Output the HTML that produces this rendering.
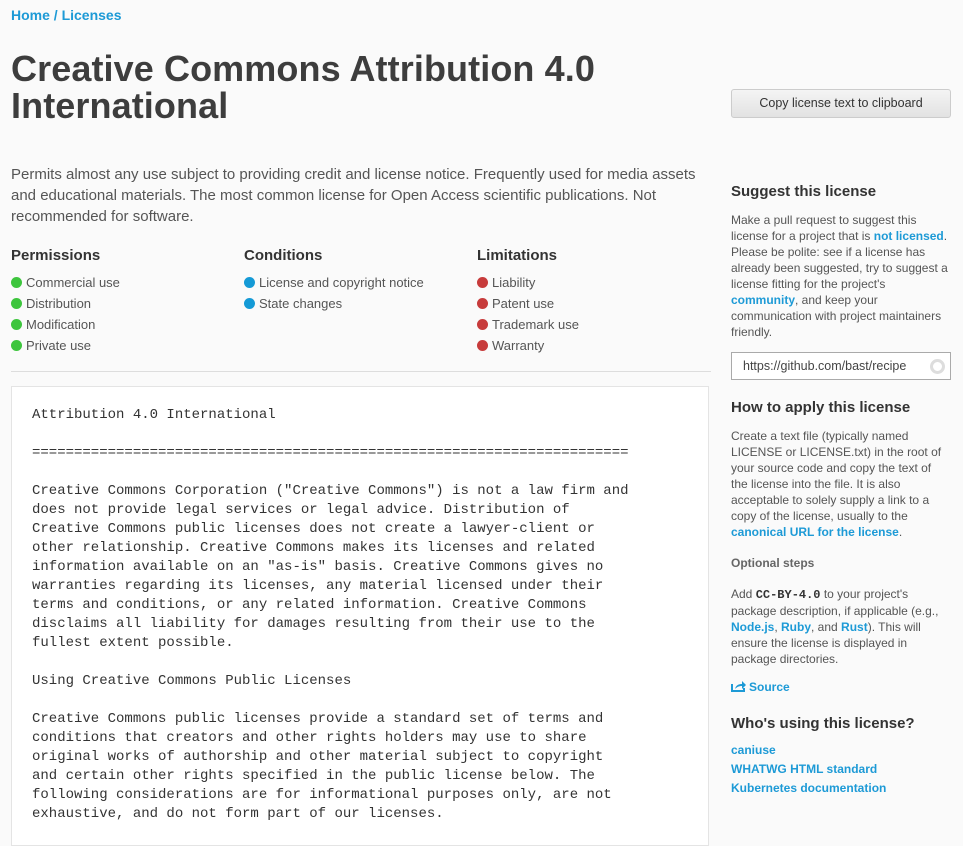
<!DOCTYPE html>
<html><head><meta charset="utf-8"><style>
body{margin:0;background:#fafafa;font-family:"Liberation Sans",sans-serif;color:#444;width:963px;height:819px;overflow:hidden;position:relative}
a{color:#1d9ad6;text-decoration:none;font-weight:bold}
.abs{position:absolute}
h1{position:absolute;left:11px;top:50px;margin:0;font-size:36px;line-height:37px;font-weight:900;color:#3d3d3d;letter-spacing:0.1px;width:710px}
.desc{left:11px;top:164px;width:700px;font-size:15px;line-height:21px;color:#555}
.col{top:247px;font-size:13px;color:#555}
.col h3{margin:0 0 8px;font-size:15px;color:#333}
.col div{line-height:21px}
.dot{display:inline-block;width:11px;height:11px;border-radius:50%;margin-right:4px;vertical-align:-1px}
.g{background:#3dc53d}.b{background:#149ad6}.r{background:#c73b3b}
pre{position:absolute;left:11px;top:386px;width:698px;height:460px;margin:0;background:#fff;border:1px solid #e4e4e4;font-family:"Liberation Mono",monospace;font-size:14px;line-height:19px;color:#333;padding:19px 0 0 20px;box-sizing:border-box;overflow:hidden}
.side{left:731px;width:221px;font-size:12px;line-height:16px;color:#555}
.side h4{margin:0;font-size:15px;color:#333;font-weight:900}
.btn{left:731px;top:89px;width:218px;height:27px;border:1px solid #ccc;border-radius:3px;background:linear-gradient(#f4f4f4,#e2e2e2);font-size:12.5px;text-align:center;line-height:27px;color:#333}
</style></head><body>
<div class="abs" style="left:11px;top:7px;font-size:14px;font-weight:bold;color:#1d9ad6">Home / Licenses</div>
<h1>Creative Commons Attribution 4.0 International</h1>
<div class="abs btn">Copy license text to clipboard</div>
<div class="abs desc">Permits almost any use subject to providing credit and license notice. Frequently used for media assets and educational materials. The most common license for Open Access scientific publications. Not recommended for software.</div>
<div class="abs col" style="left:11px"><h3>Permissions</h3><div><span class="dot g"></span>Commercial use</div><div><span class="dot g"></span>Distribution</div><div><span class="dot g"></span>Modification</div><div><span class="dot g"></span>Private use</div></div>
<div class="abs col" style="left:244px"><h3>Conditions</h3><div><span class="dot b"></span>License and copyright notice</div><div><span class="dot b"></span>State changes</div></div>
<div class="abs col" style="left:477px"><h3>Limitations</h3><div><span class="dot r"></span>Liability</div><div><span class="dot r"></span>Patent use</div><div><span class="dot r"></span>Trademark use</div><div><span class="dot r"></span>Warranty</div></div>
<div class="abs" style="left:11px;top:371px;width:700px;border-top:1px solid #ddd"></div>
<pre>Attribution 4.0 International

=======================================================================

Creative Commons Corporation ("Creative Commons") is not a law firm and
does not provide legal services or legal advice. Distribution of
Creative Commons public licenses does not create a lawyer-client or
other relationship. Creative Commons makes its licenses and related
information available on an "as-is" basis. Creative Commons gives no
warranties regarding its licenses, any material licensed under their
terms and conditions, or any related information. Creative Commons
disclaims all liability for damages resulting from their use to the
fullest extent possible.

Using Creative Commons Public Licenses

Creative Commons public licenses provide a standard set of terms and
conditions that creators and other rights holders may use to share
original works of authorship and other material subject to copyright
and certain other rights specified in the public license below. The
following considerations are for informational purposes only, are not
exhaustive, and do not form part of our licenses.</pre>
<div class="abs side" style="top:184px"><h4>Suggest this license</h4>
<div style="margin-top:12px">Make a pull request to suggest this<br>license for a project that is <a>not licensed</a>.<br>Please be polite: see if a license has<br>already been suggested, try to suggest a<br>license fitting for the project's<br><a>community</a>, and keep your<br>communication with project maintainers<br>friendly.</div>
<div style="margin-top:12px;width:220px;height:28px;border:1px solid #aaa;background:#fff;box-sizing:border-box;padding-left:11px;line-height:26px;font-size:12.5px;color:#444;position:relative">https://github.com/bast/recipe<span style="position:absolute;right:5px;top:6px;width:9px;height:9px;border:3px solid #ddd;border-radius:50%"></span></div>
</div>
<div class="abs side" style="top:400px"><h4>How to apply this license</h4>
<div style="margin-top:12px">Create a text file (typically named<br>LICENSE or LICENSE.txt) in the root of<br>your source code and copy the text of<br>the license into the file. It is also<br>acceptable to solely supply a link to a<br>copy of the license, usually to the<br><a>canonical URL for the license</a>.</div>
<div style="margin-top:15px;font-weight:bold;color:#666">Optional steps</div>
<div style="margin-top:15px">Add <b style="font-family:'Liberation Mono',monospace;color:#333">CC-BY-4.0</b> to your project's<br>package description, if applicable (e.g.,<br><a>Node.js</a>, <a>Ruby</a>, and <a>Rust</a>). This will<br>ensure the license is displayed in<br>package directories.</div>
<div style="margin-top:12px"><a><svg width="15" height="12" viewBox="0 0 15 12" style="vertical-align:-1px;margin-right:3px"><path d="M1 4v7h12V8" fill="none" stroke="#1d9ad6" stroke-width="2"/><path d="M4 9c1-4 4-5 7-5V1l4 4-4 4V6c-3 0-5 1-7 3z" fill="#1d9ad6"/></svg>Source</a></div>
</div>
<div class="abs side" style="top:716px"><h4>Who's using this license?</h4>
<div style="margin-top:9px;line-height:19px"><a>caniuse</a><br><a>WHATWG HTML standard</a><br><a>Kubernetes documentation</a></div>
</div>
</body></html>
